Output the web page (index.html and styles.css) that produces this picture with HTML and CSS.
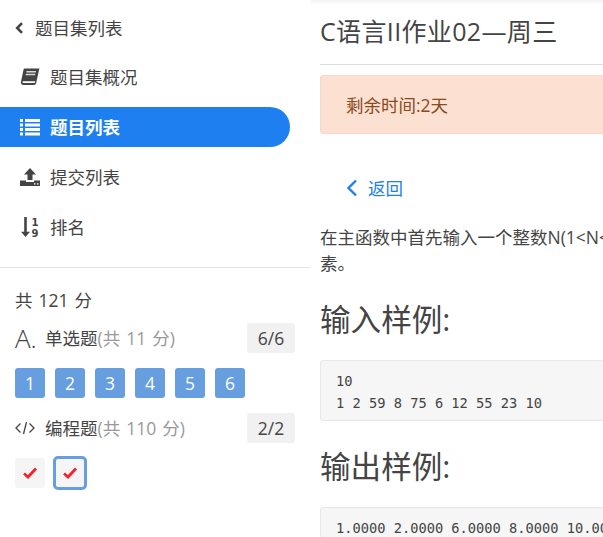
FILE: index.html
```
<!DOCTYPE html>
<html lang="zh">
<head>
<meta charset="utf-8">
<title>题目列表</title>
<link rel="stylesheet" href="styles.css">
</head>
<body>
<div class="app">
  <aside class="sidebar">
    <div class="back">
      <svg class="back-icon" viewBox="0 0 9 12"><path d="M7 1.200L2.200 6 7 10.800" fill="none" stroke="#444" stroke-width="2.600"/></svg>
      <span>题目集列表</span>
    </div>
    <nav class="nav">
      <a class="nav-item">
        <svg class="nav-icon" viewBox="0 0 20 18"><path d="M5 .5h14.500l-.5 1.400-2.800 13c-.3 1.300-1 2-2.300 2H3.500C1.500 16.900.4 15.400 1 13.500L3.500 1.800C3.700 1 4.200.5 5 .5z" fill="#444"/><path d="M2.800 13.300h12.400l-.4 1.700H3.300c-1 0-1-1.200-.5-1.700z" fill="#fff"/><path d="M6.600 3h9.400l-.3 1.500H6.300zM5.900 5.800h9.400l-.3 1.500H5.600z" fill="#d8d8d8"/></svg>
        <span>题目集概况</span>
      </a>
      <a class="nav-item active">
        <svg class="nav-icon" viewBox="0 0 20 18"><path d="M0 1h3v3H0zM5 1h15v3H5zM0 5.500h3v3H0zM5 5.500h15v3H5zM0 10h3v3H0zM5 10h15v3H5zM0 14.500h3v3H0zM5 14.500h15v3H5z" fill="#fff"/></svg>
        <span>题目列表</span>
      </a>
      <a class="nav-item">
        <svg class="nav-icon" viewBox="0 0 20 18"><path d="M10 0l6 6.500h-3.500V12h-5V6.500H4z" fill="#444"/><path d="M0 12.500h6V14h8v-1.500h6V18H0z" fill="#444"/><path d="M14 15.200h1.500v1.300H14zM17 15.200h1.500v1.300H17z" fill="#fff"/></svg>
        <span>提交列表</span>
      </a>
      <a class="nav-item">
        <svg class="nav-icon" viewBox="0 0 20 20"><path d="M4.200 0h2.600v14.800H10L5.500 20 1 14.800h3.200z" fill="#444"/><text class="rank-num" x="11.500" y="8.500">1</text><text class="rank-num" x="11.500" y="19.500">9</text></svg>
        <span>排名</span>
      </a>
    </nav>
    <div class="summary">
      <div class="total">共 121 分</div>
      <div class="section-head">
        <span class="section-mark">A.</span>
        <span class="section-title">单选题<span class="muted">(共 11 分)</span></span>
        <span class="count">6/6</span>
      </div>
      <div class="squares">
        <span class="num">1</span><span class="num">2</span><span class="num">3</span><span class="num">4</span><span class="num">5</span><span class="num">6</span>
      </div>
      <div class="section-head">
        <svg class="code-icon" viewBox="0 0 20 14"><path d="M5.500 2.500L1 7l4.500 4.500M14.500 2.500L19 7l-4.500 4.500M11.500 1l-3 12" fill="none" stroke="#444" stroke-width="1.300"/></svg>
        <span class="section-title">编程题<span class="muted">(共 110 分)</span></span>
        <span class="count">2/2</span>
      </div>
      <div class="checks">
        <span class="check"><svg class="tick" viewBox="0 0 14 12"><path d="M1 6.500l4 3.500 8-8.500" fill="none" stroke="#f5222d" stroke-width="2.800"/></svg></span>
        <span class="check current"><svg class="tick" viewBox="0 0 14 12"><path d="M1 6.500l4 3.500 8-8.500" fill="none" stroke="#f5222d" stroke-width="2.800"/></svg></span>
      </div>
    </div>
  </aside>
  <main class="content">
    <h1 class="title">C语言II作业02—周三</h1>
    <div class="alert">剩余时间:2天</div>
    <a class="return">
      <svg class="return-icon" viewBox="0 0 12 18"><path d="M10 1.500L2.500 9l7.500 7.500" fill="none" stroke="#1e7ff0" stroke-width="2.400"/></svg>
      <span>返回</span>
    </a>
    <p class="desc">在主函数中首先输入一个整数N(1&lt;N&lt;=100)，然后输入N个整数，输出其中的最小元素。</p>
    <h2 class="sample-title">输入样例:</h2>
    <pre class="code">10
1 2 59 8 75 6 12 55 23 10</pre>
    <h2 class="sample-title">输出样例:</h2>
    <pre class="code">1.0000 2.0000 6.0000 8.0000 10.0000 12.0000</pre>
  </main>
</div>
</body>
</html>
```

FILE: styles.css
```
* { box-sizing: border-box; }
html, body { margin: 0; padding: 0; height: 100%; overflow: hidden; background: #fff; }
body { font-family: "Open Sans", "Noto Sans CJK SC", sans-serif; color: #444; font-size: 17.5px; }
.app { display: flex; width: 603px; height: 537px; overflow: hidden; }
.sidebar { flex: 0 0 310px; width: 310px; }
.back { display: flex; align-items: center; height: 26px; margin-top: 15px; padding-left: 15px; line-height: 26px; gap: 11px; }
.back-icon { width: 9px; height: 12px; }
.nav { margin-top: 16px; padding-bottom: 20px; border-bottom: 1px solid #e4e4e4; }
.nav-item { display: flex; align-items: center; width: 290px; height: 40px; margin-bottom: 10px; padding-left: 20px; gap: 10px; line-height: 26px; border-radius: 0 20px 20px 0; }
.nav-item:last-child { margin-bottom: 0; }
.nav-item.active { background: #1e7ff0; color: #fff; font-weight: 700; }
.nav-icon { width: 20px; height: 20px; flex: none; }
.rank-num { font: 700 10px "DejaVu Sans", sans-serif; fill: #444; }
.summary { padding: 0 15px; }
.total { margin-top: 19px; height: 26px; line-height: 26px; word-spacing: 1.5px; }
.section-head { display: flex; align-items: center; height: 30px; margin-top: 10px; }
.section-mark { width: 30px; font: 300 26px/30px "Open Sans", sans-serif; color: #444; }
.code-icon { width: 20px; height: 14px; margin-right: 10px; }
.section-title { flex: 1; line-height: 30px; }
.muted { color: #999; word-spacing: 1.5px; }
.count { width: 48px; height: 30px; text-align: center; background: #f1f1f1; border-radius: 3px; line-height: 30px; }
.squares { display: flex; gap: 10px; margin-top: 15px; margin-bottom: 15px; }
.num { width: 30px; height: 30px; border-radius: 3px; background: #669ee0; color: #fff; text-align: center; line-height: 30px; }
.squares + .section-head { margin-top: 0; }
.checks { display: flex; align-items: center; gap: 8px; margin-top: 13px; }
.check { display: flex; align-items: center; justify-content: center; width: 30px; height: 30px; background: #f5f5f5; border-radius: 3px; }
.check.current { width: 34px; height: 34px; border: 3px solid #669ee0; border-radius: 5px; }
.tick { width: 14px; height: 12px; }
.content { flex: 0 0 auto; width: 660px; padding: 0 0 0 10px; background: linear-gradient(#f3f3f3, #fff 5px); }
.title { margin: 12px 0 0; height: 53px; line-height: 38px; font-size: 25px; letter-spacing: .35px; font-weight: 400; border-bottom: 1px solid #ddd; }
.alert { margin-top: 10px; height: 59px; padding: 1px 0 0 25px; line-height: 57px; background: #fce1d3; border: 1px solid #f9d7c4; border-radius: 3px; color: #8a4a1c; }
.return { display: flex; align-items: center; gap: 10px; margin-top: 41px; padding-left: 26px; height: 26px; line-height: 26px; color: #1e7ff0; }
.return-icon { width: 12px; height: 18px; }
.desc { margin: 23px 0 0; width: 645px; line-height: 26.25px; }
.sample-title { margin: 19px 0 0; height: 46px; line-height: 46px; font-size: 30.6px; font-weight: 400; }
.code { margin: 18px 0 0; padding: 9px 15px; height: 61px; font: 13.7px/22px "DejaVu Sans Mono", monospace; background: #f6f6f6; border: 1px solid #e8e8e8; border-radius: 3px; }
.code + .sample-title { margin-top: 22px; }
```
